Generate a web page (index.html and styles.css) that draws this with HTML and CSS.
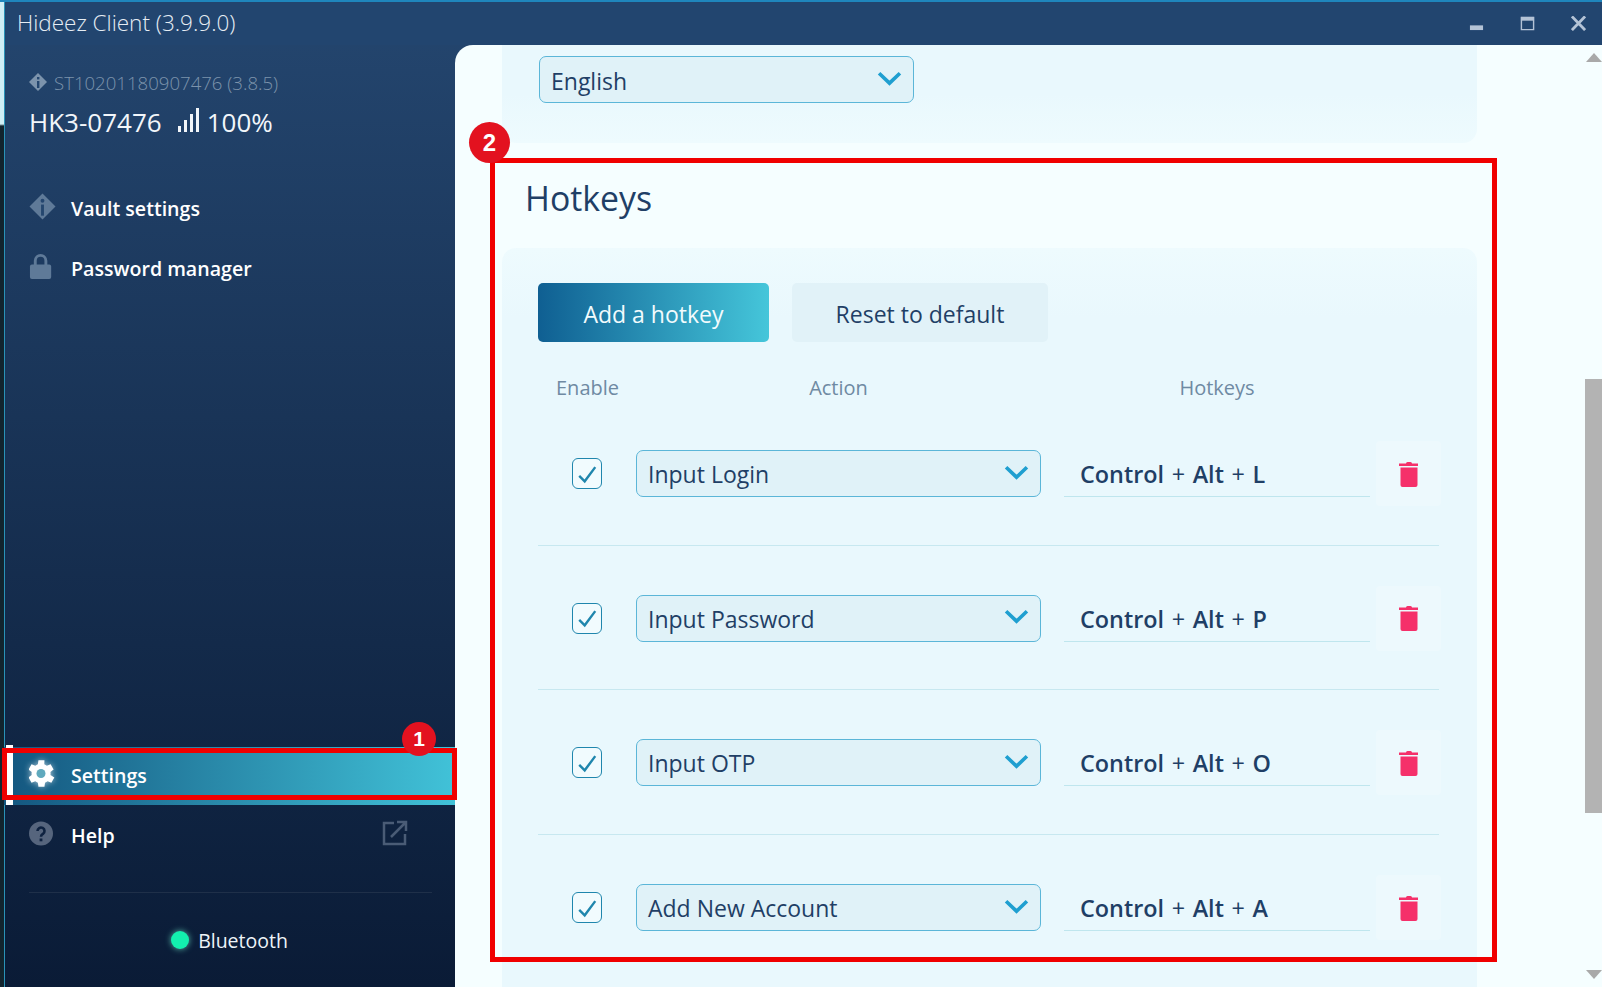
FILE: index.html
```html
<!DOCTYPE html>
<html lang="en">
<head>
    <meta charset="UTF-8">
    <meta name="viewport" content="width=device-width, initial-scale=1.0">
    <title>Hideez Client</title>
    <link rel="stylesheet" href="styles.css">
</head>

<body>
    <div class="window">
        <div class="titlebar">
            <span class="app-title">Hideez Client (3.9.9.0)</span>
            <div class="win-buttons">
                <svg class="win-icon" viewBox="0 0 16 16"><rect x="1" y="10" width="14" height="5" fill="#b4c3d6"/></svg>
                <svg class="win-icon" viewBox="0 0 16 16"><path d="M1.5 1.5h13v13h-13z" fill="none" stroke="#b4c3d6" stroke-width="1.5"/><rect x="1" y="1" width="14" height="4" fill="#b4c3d6"/></svg>
                <svg class="win-icon" viewBox="0 0 16 16"><path d="M1 0.5 L15 15 M15 0.5 L1 15" stroke="#b4c3d6" stroke-width="3"/></svg>
            </div>
        </div>

        <div class="body-row">
            <aside class="sidebar">
                <div class="device">
                    <div class="device-serial">
                        <svg class="serial-icon" viewBox="1 1 18 18"><path d="M10 1 L19 10 L10 19 L1 10Z" fill="#7c93ac"/><rect x="9" y="5" width="2.4" height="2.4" fill="#24466f"/><rect x="9" y="9" width="2.4" height="7" fill="#24466f"/></svg>
                        <span>ST10201180907476 (3.8.5)</span>
                    </div>
                    <div class="device-name">
                        <span>HK3-07476</span>
                        <svg class="signal" viewBox="0 0 22 24"><rect x="0" y="18" width="3" height="6"/><rect x="6" y="12" width="3" height="12"/><rect x="12" y="6" width="3" height="18"/><rect x="18" y="0" width="3" height="24"/></svg>
                        <span>100%</span>
                    </div>
                </div>

                <nav class="nav-top">
                    <a class="nav-item">
                        <svg class="nav-icon" viewBox="0 0 28 28"><path d="M14 0.5 L27.5 14 L14 27.5 L0.5 14Z" fill="#5f7a98"/><circle cx="14" cy="8" r="2" fill="#24466f"/><path d="M12.5 12h3v11.5h-3z" fill="#24466f"/></svg>
                        <span>Vault settings</span>
                    </a>
                    <a class="nav-item">
                        <svg class="nav-icon" viewBox="2 0 28 28"><path d="M7 13V8a7 7 0 0 1 14 0v5h-3V8a4 4 0 0 0-8 0v5z" fill="#5f7a98"/><rect x="3" y="12" width="22" height="15" rx="2" fill="#5f7a98"/></svg>
                        <span>Password manager</span>
                    </a>
                </nav>

                <nav class="nav-bottom">
                    <a class="nav-item active">
                        <svg class="nav-icon gear" viewBox="4 3 18 18"><path fill="#fff" d="M19.4 13a7.5 7.5 0 0 0 0-2l2.1-1.6-2-3.5-2.5 1a7.500 7.500 0 0 0-1.700-1L15.400 3.200h-4L11 5.900a7.500 7.500 0 0 0-1.700 1l-2.500-1-2 3.500L6.900 11a7.500 7.500 0 0 0 0 2l-2.100 1.600 2 3.500 2.500-1a7.500 7.500 0 0 0 1.700 1l.4 2.700h4l.4-2.700a7.500 7.500 0 0 0 1.700-1l2.500 1 2-3.500z" transform="translate(-1.100 0)"/><circle cx="12" cy="12" r="3" fill="#5fa9bd"/></svg>
                        <span>Settings</span>
                    </a>
                    <a class="nav-item">
                        <svg class="nav-icon" viewBox="0 -1.500 27 27"><circle cx="12" cy="12" r="12" fill="#56657d"/><path d="M8.500 9.500a3.500 3.500 0 1 1 5.500 2.900c-1.200.8-2 1.300-2 2.800" fill="none" stroke="#0e2240" stroke-width="2.600"/><rect x="10.600" y="17" width="2.800" height="2.800" fill="#0e2240"/></svg>
                        <span>Help</span>
                        <svg class="ext-icon" viewBox="0 0 26 26"><path d="M12 3H2v21h21V14" fill="none" stroke="#4a5c76" stroke-width="2.500"/><path d="M9 17 L23 3 M15 2h9v9" fill="none" stroke="#4a5c76" stroke-width="2.500"/></svg>
                    </a>
                    <div class="nav-divider"></div>
                    <div class="connection">
                        <span class="status-dot"></span>
                        <span>Bluetooth</span>
                    </div>
                </nav>
            </aside>

            <main class="panel">
                <div class="panel-scroll">
                    <section class="card card-language">
                        <div class="select select-language">
                            <span>English</span>
                            <svg class="chevron" viewBox="0 0 24 14"><path d="M2 2 L12 11.500 L22 2" fill="none" stroke="#1f9fd0" stroke-width="3.500"/></svg>
                        </div>
                    </section>

                    <h2 class="section-title">Hotkeys</h2>

                    <section class="card card-hotkeys">
                        <div class="button-row">
                            <button class="btn btn-primary">Add a hotkey</button>
                            <button class="btn btn-plain">Reset to default</button>
                        </div>

                        <div class="hotkey-grid hotkey-head">
                            <span class="head-enable">Enable</span>
                            <span class="head-action">Action</span>
                            <span class="head-keys">Hotkeys</span>
                        </div>

                        <div class="hotkey-grid hotkey-row">
                            <span class="checkbox"><svg viewBox="0 0 24 24"><path d="M3.500 14 L9.500 20 L21 4.500" fill="none" stroke="#1f86ad" stroke-width="2.600"/></svg></span>
                            <div class="select"><span>Input Login</span><svg class="chevron" viewBox="0 0 24 14"><path d="M2 2 L12 11.500 L22 2" fill="none" stroke="#1f9fd0" stroke-width="3.500"/></svg></div>
                            <div class="hotkey-field"><b>Control</b> + <b>Alt</b> + <b>L</b></div>
                            <span class="trash"><svg viewBox="0 0 20 26"><path d="M7 2.500a1.500 1.500 0 0 1 1.500-1.500h3a1.500 1.500 0 0 1 1.500 1.500h6v2.500h-20v-2.500z" fill="#f5306a"/><path d="M1.500 6.500h17v17.500a2 2 0 0 1-2 2h-13a2 2 0 0 1-2-2z" fill="#f5306a"/></svg></span>
                        </div>

                        <div class="hotkey-grid hotkey-row">
                            <span class="checkbox"><svg viewBox="0 0 24 24"><path d="M3.500 14 L9.500 20 L21 4.500" fill="none" stroke="#1f86ad" stroke-width="2.600"/></svg></span>
                            <div class="select"><span>Input Password</span><svg class="chevron" viewBox="0 0 24 14"><path d="M2 2 L12 11.500 L22 2" fill="none" stroke="#1f9fd0" stroke-width="3.500"/></svg></div>
                            <div class="hotkey-field"><b>Control</b> + <b>Alt</b> + <b>P</b></div>
                            <span class="trash"><svg viewBox="0 0 20 26"><path d="M7 2.500a1.500 1.500 0 0 1 1.500-1.500h3a1.500 1.500 0 0 1 1.500 1.500h6v2.500h-20v-2.500z" fill="#f5306a"/><path d="M1.500 6.500h17v17.500a2 2 0 0 1-2 2h-13a2 2 0 0 1-2-2z" fill="#f5306a"/></svg></span>
                        </div>

                        <div class="hotkey-grid hotkey-row">
                            <span class="checkbox"><svg viewBox="0 0 24 24"><path d="M3.500 14 L9.500 20 L21 4.500" fill="none" stroke="#1f86ad" stroke-width="2.600"/></svg></span>
                            <div class="select"><span>Input OTP</span><svg class="chevron" viewBox="0 0 24 14"><path d="M2 2 L12 11.500 L22 2" fill="none" stroke="#1f9fd0" stroke-width="3.500"/></svg></div>
                            <div class="hotkey-field"><b>Control</b> + <b>Alt</b> + <b>O</b></div>
                            <span class="trash"><svg viewBox="0 0 20 26"><path d="M7 2.500a1.500 1.500 0 0 1 1.500-1.500h3a1.500 1.500 0 0 1 1.500 1.500h6v2.500h-20v-2.500z" fill="#f5306a"/><path d="M1.500 6.500h17v17.500a2 2 0 0 1-2 2h-13a2 2 0 0 1-2-2z" fill="#f5306a"/></svg></span>
                        </div>

                        <div class="hotkey-grid hotkey-row last">
                            <span class="checkbox"><svg viewBox="0 0 24 24"><path d="M3.500 14 L9.500 20 L21 4.500" fill="none" stroke="#1f86ad" stroke-width="2.600"/></svg></span>
                            <div class="select"><span>Add New Account</span><svg class="chevron" viewBox="0 0 24 14"><path d="M2 2 L12 11.500 L22 2" fill="none" stroke="#1f9fd0" stroke-width="3.500"/></svg></div>
                            <div class="hotkey-field"><b>Control</b> + <b>Alt</b> + <b>A</b></div>
                            <span class="trash"><svg viewBox="0 0 20 26"><path d="M7 2.500a1.500 1.500 0 0 1 1.500-1.500h3a1.500 1.500 0 0 1 1.500 1.500h6v2.500h-20v-2.500z" fill="#f5306a"/><path d="M1.500 6.500h17v17.500a2 2 0 0 1-2 2h-13a2 2 0 0 1-2-2z" fill="#f5306a"/></svg></span>
                        </div>
                    </section>
                </div>

                <div class="scrollbar">
                    <span class="arrow-up"></span>
                    <span class="thumb"></span>
                    <span class="arrow-down"></span>
                </div>
            </main>
        </div>

        <!-- red marks drawn over the screenshot -->
        <div class="mark mark-settings"></div>
        <div class="badge badge-one">1</div>
        <div class="mark mark-hotkeys"></div>
        <div class="badge badge-two">2</div>
    </div>
</body>
</html>
```

FILE: styles.css
```css
* {
    box-sizing: border-box;
}

html, body {
    margin: 0;
    height: 100%;
    overflow: hidden;
}

body {
    font-family: "Open Sans", "Noto Sans", sans-serif;
    color: #1f3f66;
    background: #0a1b36;
}

.window {
    position: relative;
    width: 1602px;
    height: 987px;
    display: flex;
    flex-direction: column;
    overflow: hidden;
    padding-left: 4px;
    border-top: 2px solid #1f86bd;
    background: linear-gradient(#24466f, #0a1b36);
}

/* the thin strip of desktop that shows on the left */
.window::before {
    content: "";
    position: absolute;
    left: 0;
    top: 0;
    bottom: 0;
    width: 4px;
    border-right: 1px solid #2a93b8;
    background: linear-gradient(#cfeef5 0, #cfeef5 122px, #12242e 124px, #12242e 100%);
}

.titlebar {
    height: 43px;
    flex: none;
    display: flex;
    align-items: center;
    justify-content: space-between;
    padding: 0 16px 2px 13px;
    background: #22456f;
}

.app-title {
    font-size: 22.500px;
    font-weight: 300;
    color: #e6edf4;
}

.win-buttons {
    display: flex;
    gap: 36px;
    align-items: center;
    padding-top: 2px;
}

.win-icon {
    width: 15px;
    height: 15px;
}

.body-row {
    flex: 1;
    display: flex;
    min-height: 0;
}

.sidebar {
    width: 451px;
    flex: none;
    display: flex;
    flex-direction: column;
}

.device {
    padding: 25px 0 0 25px;
}

.device-serial {
    display: flex;
    align-items: center;
    gap: 7px;
    font-size: 18.600px;
    color: #7c93ac;
    font-weight: 300;
    height: 24px;
}

.serial-icon {
    width: 18px;
    height: 18px;
}

.device-name {
    display: flex;
    align-items: center;
    margin-top: 10px;
    font-size: 26px;
    color: #f2f6fa;
    height: 36px;
}

.signal {
    width: 22px;
    height: 24px;
    margin: -4px 7px 0 16px;
    fill: #f2f6fa;
}

.nav-top {
    margin-top: 38px;
}

.nav-item {
    display: flex;
    align-items: center;
    height: 60px;
    padding-left: 25px;
    font-size: 19.600px;
    font-weight: 600;
    color: #fff;
    position: relative;
}

.nav-icon {
    width: 27px;
    height: 27px;
    margin-right: 15px;
    flex: none;
    position: relative;
    top: -2px;
}

.nav-bottom {
    margin-top: auto;
    padding-bottom: 22px;
}

.nav-item.active {
    height: 58px;
    background: linear-gradient(90deg, #14567f, #41c2d8);
    padding-left: 25px;
    padding-bottom: 2px;
}

/* white bar sticks out a little above the blue band */
.nav-item.active::before {
    content: "";
    position: absolute;
    left: 2px;
    top: -2px;
    bottom: 0;
    width: 7px;
    background: #fff;
}

.gear {
    filter: drop-shadow(0 0 3px rgba(255, 255, 255, 0.6));
}

.ext-icon {
    position: absolute;
    right: 47px;
    top: 15px;
    width: 26px;
    height: 26px;
}

.nav-divider {
    height: 1px;
    margin: 27px 23px 0 25px;
    background: #1f3049;
}

.connection {
    display: flex;
    align-items: center;
    justify-content: center;
    gap: 9px;
    height: 50px;
    margin-top: 22px;
    font-size: 19.500px;
    color: #eef4f8;
}

.status-dot {
    width: 18px;
    height: 18px;
    border-radius: 50%;
    background: #13f0ae;
    box-shadow: 0 0 6px rgba(120, 255, 220, 0.7);
}

.panel {
    flex: 1;
    display: flex;
    min-width: 0;
    background: #f5feff;
    border-top-left-radius: 18px;
}

.panel-scroll {
    flex: 1;
    padding-left: 47px;
    overflow: hidden;
}

.card {
    width: 975px;
    background: #e9f8fd;
    border-radius: 14px;
}

.card-language {
    height: 98px;
    padding: 11px 0 0 37px;
    border-radius: 0 0 14px 14px;
    background: linear-gradient(#e9f8fd 50%, #eefbfe);
}

.section-title {
    margin: 32px 0 27px 23px;
    height: 46px;
    line-height: 46px;
    font-size: 33.800px;
    font-weight: 400;
    color: #1f3f66;
}

.card-hotkeys {
    padding: 35px 38px 0 36px;
    height: 800px;
    background: linear-gradient(#eefbfe, #e9f8fd 70px);
}

.button-row {
    display: flex;
    gap: 23px;
}

.btn {
    height: 59px;
    border: none;
    border-radius: 5px;
    font-family: inherit;
    font-size: 23px;
    padding: 2px 0 0;
}

.btn-primary {
    width: 231px;
    background: linear-gradient(90deg, #0f5f92, #45c6da);
    color: #f2fbfd;
}

.btn-plain {
    width: 256px;
    background: #e1f2f8;
    color: #1f3f66;
}

.hotkey-grid {
    display: grid;
    grid-template-columns: 98px 405px 23px 306px 6px 65px;
    align-items: center;
}

.hotkey-head {
    height: 26px;
    margin-top: 32px;
    margin-bottom: 1px;
    font-size: 20px;
    color: #6f8aa3;
}

.head-enable {
    padding-left: 18px;
}

.head-action {
    text-align: center;
}

.head-keys {
    grid-column: 4;
    text-align: center;
}

.hotkey-row {
    height: 144.500px;
    padding-top: 2px;
    border-bottom: 1px solid #c7e8f0;
}

.hotkey-row.last {
    border-bottom: none;
}

.hotkey-row .hotkey-field {
    grid-column: 4;
}

.hotkey-row .trash {
    grid-column: 6;
}

.checkbox {
    width: 30px;
    height: 31px;
    margin-left: 34px;
    border: 1.500px solid #1f86ad;
    border-radius: 6px;
    background: #f1fbfe;
    display: flex;
    align-items: center;
    justify-content: center;
}

.checkbox svg {
    width: 22px;
    height: 22px;
}

.select {
    height: 47px;
    display: flex;
    align-items: center;
    justify-content: space-between;
    padding: 1px 11px 0 11px;
    border: 1.500px solid #5bb6d8;
    border-radius: 7px;
    background: #e0f2f8;
    font-size: 23px;
    color: #1f3f66;
}

.select-language {
    width: 375px;
    padding-top: 3px;
}

.select-language .chevron {
    margin-top: -6px;
}

.chevron {
    width: 25px;
    height: 15px;
    margin-top: -4px;
}

.hotkey-field {
    height: 47px;
    line-height: 48px;
    padding-left: 16px;
    border-bottom: 1.500px solid #bfe6ee;
    font-size: 23.400px;
    font-weight: 400;
    word-spacing: 1.500px;
    color: #1f3f66;
}

.hotkey-field b {
    font-weight: 600;
}

.trash {
    width: 65px;
    height: 65px;
    background: #edf9fd;
    border-radius: 4px;
    display: flex;
    align-items: center;
    justify-content: center;
}

.trash svg {
    width: 20px;
    height: 26px;
}

.scrollbar {
    width: 17px;
    flex: none;
    display: flex;
    flex-direction: column;
    align-items: center;
    padding-top: 8px;
}

.arrow-up {
    width: 0;
    height: 0;
    border: 8px solid transparent;
    border-top: none;
    border-bottom: 9px solid #a9a9a9;
}

.thumb {
    width: 17px;
    height: 434px;
    margin-top: 317px;
    background: #b3b3b3;
}

.arrow-down {
    width: 0;
    height: 0;
    margin-top: 157px;
    border: 8px solid transparent;
    border-bottom: none;
    border-top: 9px solid #a9a9a9;
}

.mark {
    position: absolute;
    border: 5px solid #f00000;
}

.mark-settings {
    left: 2px;
    top: 746px;
    width: 455px;
    height: 52px;
}

.mark-hotkeys {
    left: 490px;
    top: 156px;
    width: 1007px;
    height: 804px;
}

.badge {
    position: absolute;
    display: flex;
    align-items: center;
    justify-content: center;
    border-radius: 50%;
    background: #e3121f;
    color: #fff;
    font-family: "Liberation Sans", sans-serif;
    font-weight: 700;
}

.badge-one {
    left: 402px;
    top: 720px;
    width: 34px;
    height: 34px;
    font-size: 21px;
}

.badge-two {
    left: 469px;
    top: 120px;
    width: 41px;
    height: 41px;
    font-size: 24px;
}
```
